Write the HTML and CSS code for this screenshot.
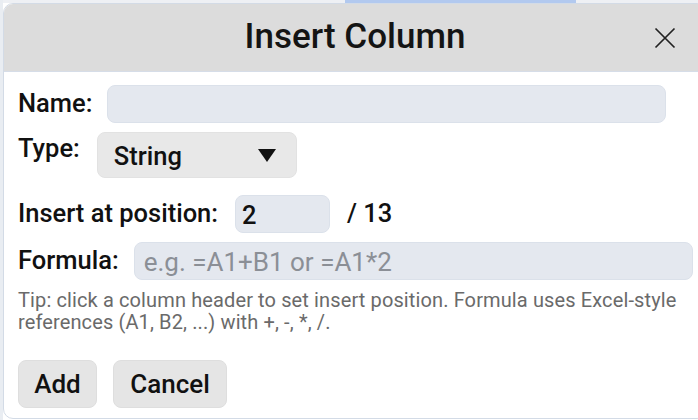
FILE: index.html
```html
<!DOCTYPE html>
<html>
<head>
<meta charset="utf-8">
<link rel="stylesheet" href="styles.css">
</head>
<body>
<div class="backdrop">
  <div class="strip"><span class="strip-a"></span><span class="strip-blue"></span><span class="strip-b"></span></div>
  <div class="dialog">
    <div class="header">
      <div class="spacer"></div>
      <div class="title">Insert Column</div>
      <button class="close" aria-label="Close">
        <svg width="22" height="22" viewBox="0 0 22 22"><path d="M1.5 1.5 L20.5 20.5 M20.5 1.5 L1.5 20.5" stroke="#222" stroke-width="1.7" fill="none"/></svg>
      </button>
    </div>
    <div class="body">
      <div class="row row-name">
        <label class="label">Name:</label>
        <div class="input name-input"></div>
      </div>
      <div class="row row-type">
        <label class="label type-label">Type:</label>
        <div class="select"><span>String</span><svg class="caret" width="18" height="13" viewBox="0 0 18 13"><path d="M0 0 H18 L9 13 Z" fill="#111"/></svg></div>
      </div>
      <div class="row row-pos">
        <label class="label">Insert at position:</label>
        <div class="input pos-input">2</div>
        <span class="total">/ 13</span>
      </div>
      <div class="row row-formula">
        <label class="label">Formula:</label>
        <div class="input formula-input placeholder">e.g. =A1+B1 or =A1*2</div>
      </div>
      <p class="tip">Tip: click a column header to set insert position. Formula uses Excel-style references (A1, B2, ...) with +, -, *, /.</p>
      <div class="actions">
        <button class="btn btn-add">Add</button>
        <button class="btn btn-cancel">Cancel</button>
      </div>
    </div>
  </div>
</div>
</body>
</html>
```

FILE: styles.css
```css
html, body {
  margin: 0;
  padding: 0;
  background: #ffffff;
  overflow: hidden;
  width: 698px;
  height: 420px;
}
.backdrop {
  font-family: Roboto, "Liberation Sans", sans-serif;
  color: #111;
  border-left: 3px solid #e9edf2;
  height: 420px;
  box-sizing: border-box;
}
.strip {
  display: flex;
  height: 3px;
}
.strip-a { width: 342px; background: #eef0f4; }
.strip-blue { width: 231px; background: #b2c9ef; }
.strip-b { flex: 1; background: #eef0f4; }
.dialog {
  width: 704px;
  height: 416px;
  box-sizing: border-box;
  border: 1px solid #d3dbe6;
  border-radius: 10px;
  overflow: hidden;
  background: #fff;
}
.header {
  display: grid;
  grid-template-columns: 1fr auto 1fr;
  align-items: center;
  height: 67px;
  background: #dcdcdc;
  border-bottom: 1px solid #d6dde8;
}
.title {
  font-size: 35px;
  font-weight: 500;
  color: #141414;
  margin-bottom: 2px;
}
.close {
  justify-self: end;
  margin-right: 30px;
  margin-top: 1px;
  background: none;
  border: none;
  padding: 0;
  width: 22px;
  height: 22px;
  display: flex;
}
.body {
  padding: 13px 0 0 14px;
}
.row {
  display: flex;
  align-items: center;
  margin-bottom: 9px;
}
.label {
  font-size: 25.5px;
  font-weight: 500;
  line-height: 30px;
  margin-right: 15px;
  margin-bottom: 3px;
}
.type-label {
  align-self: flex-start;
  margin-top: 1px;
  margin-right: 17px;
}
.row-type { margin-bottom: 17px; }
.row-pos .label { margin-right: 17px; }
.input {
  height: 37px;
  box-sizing: border-box;
  background: #e4e8ef;
  border: 1px solid #dbe1ea;
  border-radius: 8px;
  font-size: 26px;
  display: flex;
  align-items: center;
  padding: 0 9px;
}
.name-input { width: 559px; height: 38px; }
.select {
  width: 200px;
  height: 46px;
  box-sizing: border-box;
  background: #e8e8e8;
  border: 1px solid #e2e2e2;
  border-radius: 8px;
  display: flex;
  align-items: center;
  justify-content: space-between;
  padding: 1px 20px 0 16px;
  font-size: 25.5px;
  font-weight: 500;
}
.caret { display: block; margin-bottom: 1px; }
.pos-input { width: 95px; height: 38px; font-weight: 500; font-size: 25.5px; padding: 1px 6px 0; }
.total { font-size: 25.5px; font-weight: 500; margin-left: 17px; margin-bottom: 3px; }
.formula-input { width: 559px; height: 38px; padding-top: 1px; }
.placeholder { color: #8b8f96; }
.tip {
  margin: 0;
  width: 670px;
  font-size: 20px;
  line-height: 22px;
  letter-spacing: 0.12px;
  color: #6a6a6a;
}
.actions {
  display: flex;
  gap: 16px;
  margin-top: 27px;
}
.btn {
  font-family: Roboto, "Liberation Sans", sans-serif;
  height: 48px;
  background: #e5e5e5;
  border: 1px solid #dedede;
  border-radius: 8px;
  font-size: 26px;
  font-weight: 500;
  color: #111;
  padding: 0;
}
.btn-add { width: 79px; }
.btn-cancel { width: 114px; }
```
